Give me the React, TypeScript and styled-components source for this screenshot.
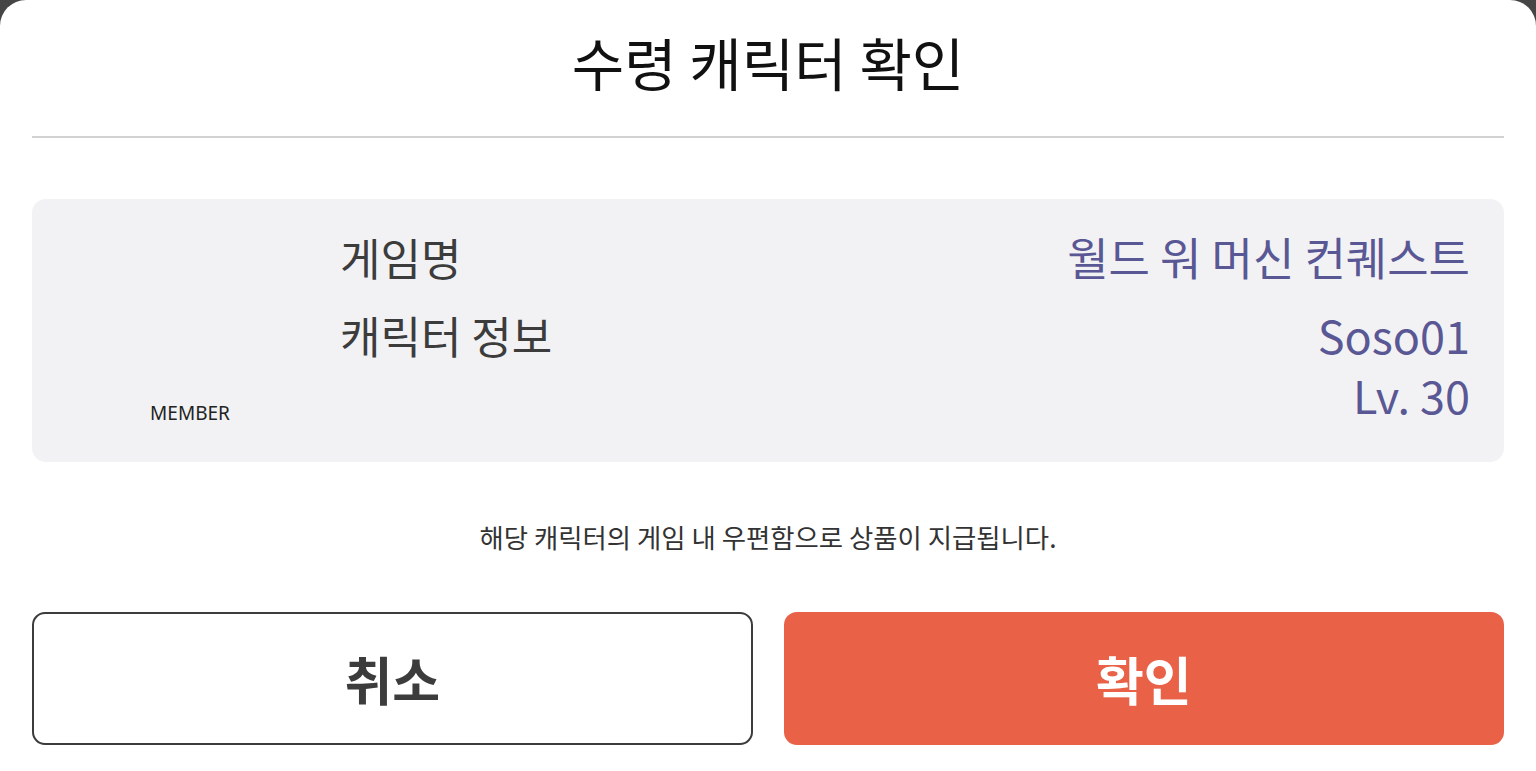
import React from "react";
import styled, { createGlobalStyle } from "styled-components";

const GlobalStyle = createGlobalStyle`
  html, body {
    margin: 0;
    padding: 0;
    background: #454545;
  }
  body {
    font-family: "Noto Sans CJK KR", "Noto Sans", sans-serif;
  }
  * {
    box-sizing: border-box;
  }
`;

const Sheet = styled.div`
  height: 771px;
  background: #fff;
  border-radius: 26px 26px 0 0;
  padding: 0 32px 26px 32px;
  display: flex;
  flex-direction: column;
`;

const Header = styled.header`
  height: 138px;
  display: flex;
  align-items: center;
  justify-content: center;
  border-bottom: 2px solid #d2d2d2;
  padding-bottom: 14px;
`;

const Title = styled.h1`
  margin: 0;
  font-size: 57px;
  font-weight: 400;
  color: #111;
`;

const Card = styled.section`
  margin-top: 61px;
  background: #f2f2f4;
  border-radius: 14px;
  padding: 28px 34px 37px 20px;
  display: grid;
  grid-template-columns: 276px 1fr;
  column-gap: 12px;
`;

const Avatar = styled.div`
  display: flex;
  flex-direction: column;
  justify-content: flex-end;
  align-items: center;
`;

const Badge = styled.span`
  font-family: "Noto Sans", "Noto Sans CJK KR", sans-serif;
  font-size: 19px;
  line-height: 24px;
  color: #222;
`;

const InfoList = styled.dl`
  margin: 0;
  display: grid;
  grid-template-columns: 1fr auto;
  row-gap: 18px;
`;

const Label = styled.dt`
  margin: 0;
  font-size: 44px;
  line-height: 60px;
  color: #3c3c3c;
`;

const Value = styled.dd`
  margin: 0;
  font-size: 45px;
  line-height: 60px;
  font-weight: 400;
  color: #5a5894;
  text-align: right;
`;

const Notice = styled.p`
  margin: 58px 0 58px;
  text-align: center;
  font-size: 26.4px;
  line-height: 34px;
  color: #333;
`;

const Actions = styled.div`
  display: grid;
  grid-template-columns: 1fr 1fr;
  gap: 31px;
  flex: 1;
`;

const Button = styled.button<{ $primary?: boolean }>`
  font-family: "Noto Sans CJK KR", sans-serif;
  font-size: 52px;
  font-weight: 700;
  border-radius: 13px;
  border: 2px solid ${(p) => (p.$primary ? "#e96147" : "#3c3c3c")};
  background: ${(p) => (p.$primary ? "#e96147" : "#fff")};
  color: ${(p) => (p.$primary ? "#fff" : "#3c3c3c")};
  display: flex;
  align-items: center;
  justify-content: center;
  cursor: pointer;
  padding: 0;
`;

export default function App() {
  return (
    <>
      <GlobalStyle />
      <Sheet>
        <Header>
          <Title>수령 캐릭터 확인</Title>
        </Header>
        <Card>
          <Avatar>
            <Badge>MEMBER</Badge>
          </Avatar>
          <InfoList>
            <Label>게임명</Label>
            <Value>월드 워 머신 컨퀘스트</Value>
            <Label>캐릭터 정보</Label>
            <Value>
              Soso01
              <br />
              Lv. 30
            </Value>
          </InfoList>
        </Card>
        <Notice>해당 캐릭터의 게임 내 우편함으로 상품이 지급됩니다.</Notice>
        <Actions>
          <Button>취소</Button>
          <Button $primary>확인</Button>
        </Actions>
      </Sheet>
    </>
  );
}
